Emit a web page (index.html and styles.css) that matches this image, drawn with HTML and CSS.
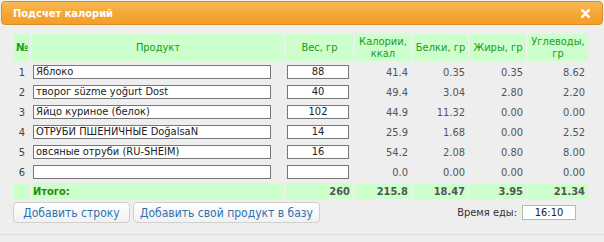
FILE: index.html
```html
<!DOCTYPE html>
<html>
<head>
<meta charset="utf-8">
<link rel="stylesheet" href="styles.css">
</head>
<body>
<div class="dialog">
  <div class="titlebar">
    <span class="title">Подсчет калорий</span>
    <svg class="close" width="9" height="9" viewBox="0 0 9 9"><path d="M1.2 1.2 L7.8 7.8 M7.8 1.2 L1.2 7.8" stroke="#fff" stroke-width="2.4" stroke-linecap="round"/></svg>
  </div>
  <div class="content">
    <table class="calc">
      <colgroup>
        <col class="c-num"><col class="c-prod"><col class="c-w"><col class="c-kc"><col class="c-b"><col class="c-f"><col class="c-u">
      </colgroup>
      <thead>
        <tr>
          <th>№</th><th>Продукт</th><th>Вес, гр</th><th>Калории,<br>ккал</th><th>Белки, гр</th><th>Жиры, гр</th><th>Углеводы,<br>гр</th>
        </tr>
      </thead>
      <tbody>
        <tr><td class="n">1</td><td><div class="inp prod">Яблоко</div></td><td><div class="inp wt">88</div></td><td class="v">41.4</td><td class="v">0.35</td><td class="v">0.35</td><td class="v">8.62</td></tr>
        <tr><td class="n">2</td><td><div class="inp prod">творог süzme yoğurt Dost</div></td><td><div class="inp wt">40</div></td><td class="v">49.4</td><td class="v">3.04</td><td class="v">2.80</td><td class="v">2.20</td></tr>
        <tr><td class="n">3</td><td><div class="inp prod">Яйцо куриное (белок)</div></td><td><div class="inp wt">102</div></td><td class="v">44.9</td><td class="v">11.32</td><td class="v">0.00</td><td class="v">0.00</td></tr>
        <tr><td class="n">4</td><td><div class="inp prod">ОТРУБИ ПШЕНИЧНЫЕ DoğalsaN</div></td><td><div class="inp wt">14</div></td><td class="v">25.9</td><td class="v">1.68</td><td class="v">0.00</td><td class="v">2.52</td></tr>
        <tr><td class="n">5</td><td><div class="inp prod">овсяные отруби (RU-SHEIM)</div></td><td><div class="inp wt">16</div></td><td class="v">54.2</td><td class="v">2.08</td><td class="v">0.80</td><td class="v">8.00</td></tr>
        <tr><td class="n">6</td><td><div class="inp prod"></div></td><td><div class="inp wt"></div></td><td class="v">0.0</td><td class="v">0.00</td><td class="v">0.00</td><td class="v">0.00</td></tr>
      </tbody>
      <tfoot>
        <tr><td></td><td class="label">Итого:</td><td class="v">260</td><td class="v">215.8</td><td class="v">18.47</td><td class="v">3.95</td><td class="v">21.34</td></tr>
      </tfoot>
    </table>
    <div class="footer">
      <div class="buttons">
        <button class="btn b1">Добавить строку</button>
        <button class="btn b2">Добавить свой продукт в базу</button>
      </div>
      <div class="time">
        <span class="time-label">Время еды:</span>
        <div class="time-inp">16:10</div>
      </div>
    </div>
  </div>
  <div class="sep"></div>
</div>
</body>
</html>
```

FILE: styles.css
```css
html, body {
  margin: 0;
  padding: 0;
  background: #eeeeee;
}
.dialog {
  width: 604px;
  height: 242px;
  padding-top: 1px;
  box-sizing: border-box;
  background: #eeeeee;
  font-family: "DejaVu Sans Condensed", "DejaVu Sans", sans-serif;
  font-size: 11px;
  color: #333;
  overflow: hidden;
}
.titlebar {
  margin: 0 1px;
  height: 22px;
  border: 1px solid #e0901e;
  border-radius: 4px;
  background: linear-gradient(#f9b955, #f3a636 55%, #f29f2a);
  display: flex;
  align-items: center;
  justify-content: space-between;
  padding: 0 12px 0 11px;
}
.title {
  color: #fff;
  font-weight: bold;
  font-size: 11px;
}
.close {
  display: block;
  margin-top: 1px;
}
.content {
  padding: 7px 0 0 12px;
}
.calc {
  border-collapse: separate;
  border-spacing: 2px;
  table-layout: fixed;
  width: 578px;
}
.c-num { width: 16px; }
.c-prod { width: 252px; }
.c-w { width: 67px; }
.c-kc { width: 56px; }
.c-b { width: 55px; }
.c-f { width: 56px; }
.c-u { width: 60px; }
.calc th, .calc td {
  padding: 0;
}
.calc thead th {
  background: #ccffcc;
  color: #1d9a1d;
  font-weight: normal;
  height: 27px;
  line-height: 12px;
  font-size: 11px;
  vertical-align: middle;
  text-align: center;
}
.calc thead th:first-child {
  font-weight: bold;
}
.calc tbody td {
  height: 18px;
  vertical-align: middle;
}
.calc td.n {
  text-align: center;
  color: #444;
}
.calc td.v {
  text-align: right;
  padding-right: 3px;
  color: #555;
}
.inp {
  box-sizing: border-box;
  height: 14px;
  border: 1px solid #777;
  background: #fff;
  color: #222;
  line-height: 12px;
  font-size: 11px;
  white-space: nowrap;
  overflow: hidden;
  margin-left: 1px;
}
.inp.prod {
  width: 238px;
  padding-left: 2px;
}
.inp.wt {
  width: 62px;
  text-align: center;
}
.calc tfoot td {
  background: #ccffcc;
  height: 16px;
  font-weight: bold;
  color: #2d8a00;
  vertical-align: middle;
}
.calc tfoot td.label {
  padding-left: 1px;
}
.footer {
  display: flex;
  align-items: center;
  justify-content: space-between;
  margin-top: 1px;
  margin-left: 1px;
  width: 563px;
}
.buttons {
  display: flex;
  gap: 3px;
}
.btn {
  height: 21px;
  box-sizing: border-box;
  border: 1px solid #d0d0d0;
  border-radius: 4px;
  background: linear-gradient(#ffffff, #f1f1f1);
  color: #2e73b0;
  font-family: "DejaVu Sans Condensed", "DejaVu Sans", sans-serif;
  font-size: 12px;
  padding: 0;
  margin: 0;
}
.b1 { width: 117px; }
.b2 { width: 187px; }
.time {
  display: flex;
  align-items: center;
  gap: 5px;
}
.time-label {
  color: #333;
  font-size: 11px;
}
.time-inp {
  box-sizing: border-box;
  width: 54px;
  height: 15px;
  border: 1px solid #a4c4a4;
  background: #fff;
  text-align: center;
  line-height: 13px;
  color: #222;
  font-size: 11px;
}
.sep {
  margin-top: 11px;
  margin-left: 1px;
  border-top: 1px solid #dcdcdc;
}
```
